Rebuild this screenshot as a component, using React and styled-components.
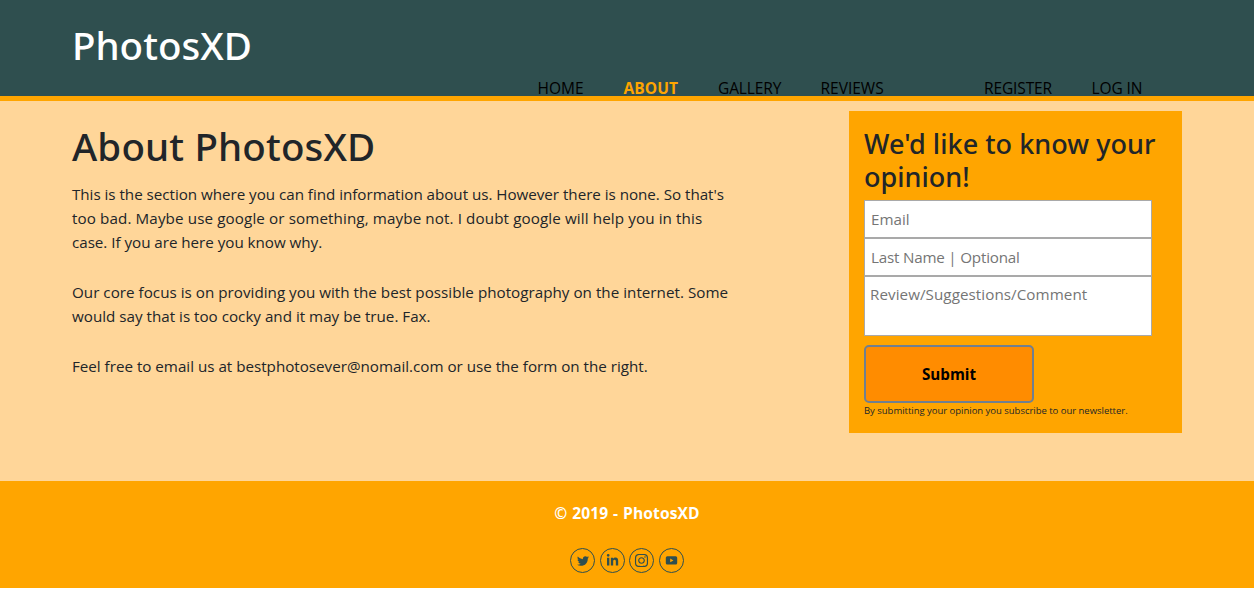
import React from "react";
import styled, { createGlobalStyle } from "styled-components";
import { FaTwitter, FaLinkedinIn, FaInstagram } from "react-icons/fa";

const GlobalStyle = createGlobalStyle`
  *, *::before, *::after { box-sizing: border-box; }
  body {
    margin: 0;
    background: #fff;
    color: #212529;
    font: 400 15.2px/24px "Open Sans", "Noto Sans", sans-serif;
  }
`;

const Header = styled.header`
  height: 101px;
  padding: 21px 72px 0;
  background: #2f4f4f;
  border-bottom: 5px solid #ffa500;
`;

const Brand = styled.h1`
  margin: 0;
  color: #fff;
  font: 500 38.5px/48px "Noto Sans", sans-serif;
`;

const Nav = styled.nav`
  display: flex;
  justify-content: flex-end;
  gap: 40px;
  margin-top: 7px;
  padding-right: 38.5px;
`;

const NavLink = styled.a`
  flex: none;
  width: ${(p) => p.$width}px;
  margin-left: ${(p) => (p.$apart ? 60 : 0)}px;
  color: ${(p) => (p.$active ? "#ffa500" : "#000")};
  font-size: 15.5px;
  line-height: 25px;
  font-weight: ${(p) => (p.$active ? 700 : 400)};
  letter-spacing: ${(p) => p.$track || 0}px;
  text-decoration: none;
  white-space: nowrap;
`;

const Main = styled.main`
  display: flex;
  justify-content: space-between;
  align-items: flex-start;
  height: 380px;
  padding: 10px 72px 0;
  background: #ffd699;
`;

const Article = styled.article`
  padding-top: 11px;
`;

const Title = styled.h2`
  margin: 0 0 12px;
  font: 500 38.5px/48px "Noto Sans", sans-serif;
  letter-spacing: 0.15px;
`;

const Paragraph = styled.p`
  margin: 0 0 26px;
`;

const Line = styled.span`
  display: block;
  white-space: nowrap;
  letter-spacing: ${(p) => p.$track || 0}px;
`;

const Panel = styled.form`
  display: flex;
  flex-direction: column;
  align-items: flex-start;
  width: 333px;
  height: 322px;
  padding: 16px 15px 0;
  background: #ffa500;
`;

const PanelTitle = styled.h3`
  margin: 0 0 7px;
  font: 500 27px/33px "Noto Sans", sans-serif;
`;

const Field = styled.input`
  width: 288px;
  height: 38px;
  padding: 0 6px;
  border: 1px solid #a9a9a9;
  border-radius: 0;
  background: #fff;
  font: inherit;
  letter-spacing: ${(p) => p.$track || 0}px;
  &::placeholder { color: #757575; }
`;

const Comment = styled.textarea`
  display: block;
  width: 288px;
  height: 60px;
  padding: 5px;
  border: 1px solid #a9a9a9;
  border-radius: 0;
  background: #fff;
  font: inherit;
  letter-spacing: 0.06px;
  resize: none;
  &::placeholder { color: #757575; }
`;

const Submit = styled.button`
  width: 170px;
  height: 58px;
  margin-top: 9px;
  padding: 0;
  border: 2px solid #708090;
  border-radius: 5px;
  background: #ff8c00;
  color: #000;
  font: inherit;
  font-weight: 700;
`;

const Notice = styled.small`
  font-size: 9.5px;
  line-height: 15px;
  letter-spacing: -0.02px;
`;

const Footer = styled.footer`
  display: flex;
  flex-direction: column;
  align-items: center;
  height: 107px;
  padding-top: 20px;
  background: #ffa500;
`;

const Copyright = styled.p`
  margin: 0 0 23px;
  color: #fff;
  font-weight: 700;
  font-size: 15.6px;
  letter-spacing: 0.1px;
  word-spacing: 0.7px;
`;

const Socials = styled.div`
  display: flex;
  gap: 4.6px;
`;

const Social = styled.a`
  display: flex;
  align-items: center;
  justify-content: center;
  width: 25px;
  height: 25px;
  border: 1px solid #2f4f4f;
  border-radius: 50%;
  color: #2f4f4f;
`;

const Play = () => (
  <svg width="13" height="13" viewBox="0 0 13 13">
    <path
      fill="currentColor"
      fillRule="evenodd"
      d="M2.3 2.2h8.4a1.5 1.5 0 0 1 1.5 1.5v5.4a1.5 1.5 0 0 1-1.5 1.5H2.3a1.5 1.5 0 0 1-1.5-1.5V3.7a1.5 1.5 0 0 1 1.5-1.5zM5.2 4.5v3.8l3.3-1.9z"
    />
  </svg>
);

export default function App() {
  return (
    <>
      <GlobalStyle />
      <Header>
        <Brand>PhotosXD</Brand>
        <Nav>
          <NavLink $width={46}>HOME</NavLink>
          <NavLink $width={54.5} $active $track={0.1}>ABOUT</NavLink>
          <NavLink $width={62.5} $track={-0.1}>GALLERY</NavLink>
          <NavLink $width={63.5}>REVIEWS</NavLink>
          <NavLink $width={67.5} $apart $track={-0.12}>REGISTER</NavLink>
          <NavLink $width={52} $track={-0.1}>LOG IN</NavLink>
        </Nav>
      </Header>
      <Main>
        <Article>
          <Title>About PhotosXD</Title>
          <Paragraph>
            <Line $track={-0.03}>This is the section where you can find information about us. However there is none. So that's</Line>
            <Line $track={0.11}>too bad. Maybe use google or something, maybe not. I doubt google will help you in this</Line>
            <Line $track={-0.03}>case. If you are here you know why.</Line>
          </Paragraph>
          <Paragraph>
            <Line $track={0.02}>Our core focus is on providing you with the best possible photography on the internet. Some</Line>
            <Line>would say that is too cocky and it may be true. Fax.</Line>
          </Paragraph>
          <Paragraph>
            <Line $track={-0.01}>Feel free to email us at bestphotosever@nomail.com or use the form on the right.</Line>
          </Paragraph>
        </Article>
        <Panel>
          <PanelTitle>
            <Line $track={0.04}>We'd like to know your</Line>
            <Line>opinion!</Line>
          </PanelTitle>
          <Field placeholder="Email" />
          <Field placeholder="Last Name | Optional" $track={-0.2} />
          <Comment placeholder="Review/Suggestions/Comment" />
          <Submit type="button">Submit</Submit>
          <Notice>By submitting your opinion you subscribe to our newsletter.</Notice>
        </Panel>
      </Main>
      <Footer>
        <Copyright>© 2019 - PhotosXD</Copyright>
        <Socials>
          <Social><FaTwitter size={12} /></Social>
          <Social><FaLinkedinIn size={13} /></Social>
          <Social><FaInstagram size={15} /></Social>
          <Social><Play /></Social>
        </Socials>
      </Footer>
    </>
  );
}
